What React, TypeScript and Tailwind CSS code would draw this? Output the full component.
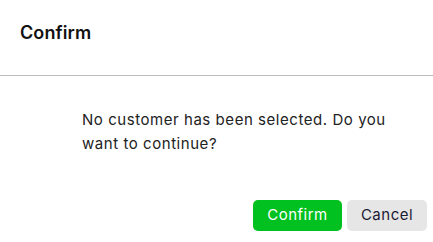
import React from 'react';

export default function App() {
  return (
    <div className="w-[433px] h-[242px] bg-white flex flex-col font-['Inter','Liberation_Sans',sans-serif]">
      {/* Header */}
      <div className="h-[76px] flex items-start pt-[22px] px-5 border-b border-[#bdbdbd]">
        <h2 className="text-[18px] leading-[22px] font-semibold text-[#111] tracking-[0.1px]">Confirm</h2>
      </div>

      {/* Body */}
      <div className="pl-[82px] pr-[30px] pt-[32px]">
        <p className="text-[15px] leading-[24px] text-[#222] tracking-[0.55px]">
          No customer has been selected. Do you want to continue?
        </p>
      </div>

      {/* Footer */}
      <div className="mt-auto flex justify-end gap-[5px] pr-[6px] pb-[11px]">
        <button className="w-[89px] h-[31px] rounded-[5px] bg-[#00c11f] text-white text-[15px] tracking-[0.5px]">
          Confirm
        </button>
        <button className="w-[80px] h-[31px] rounded-[5px] bg-[#e6e6e6] text-[#1b1b35] text-[15px] tracking-[0.5px]">
          Cancel
        </button>
      </div>
    </div>
  );
}
